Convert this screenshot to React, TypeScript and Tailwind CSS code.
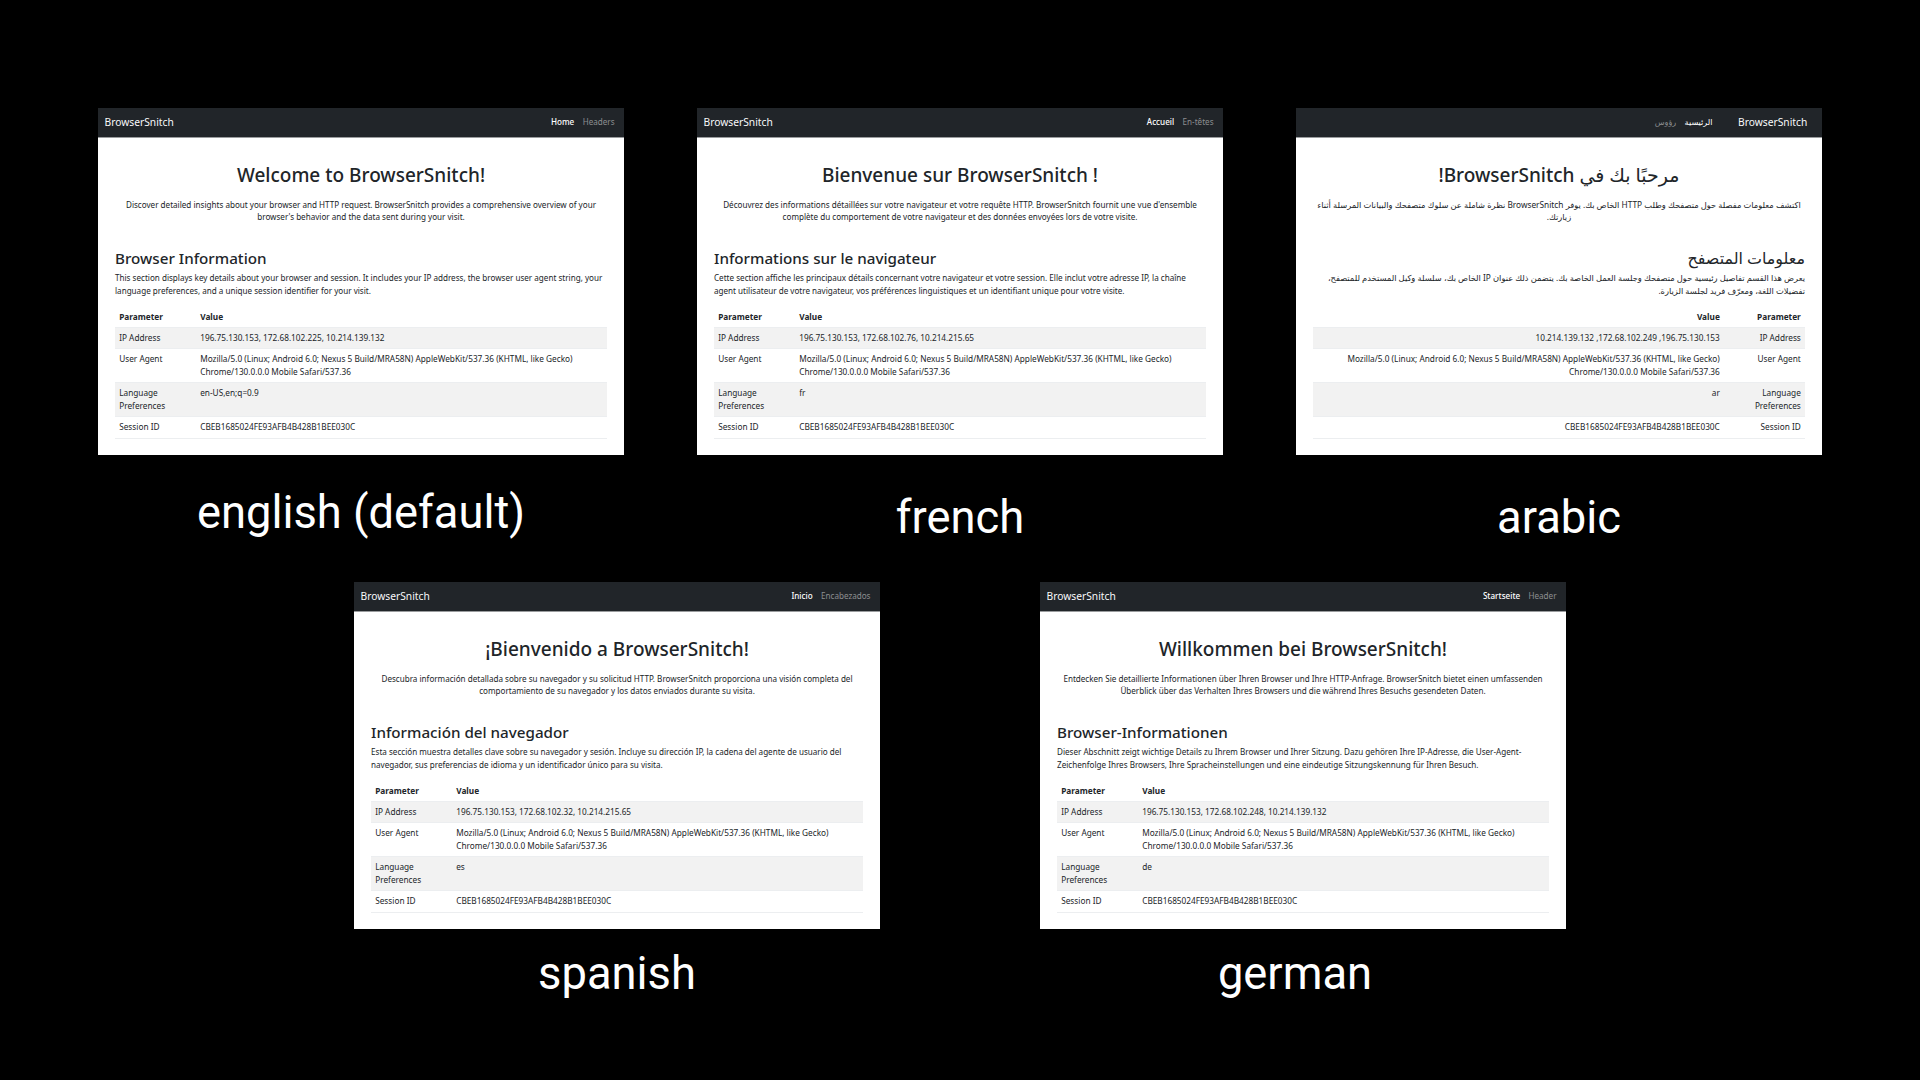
type Lang = {
  home: string;
  headers: string;
  title: string;
  intro: string;
  heading: string;
  body: string;
  ip: string;
  lang: string;
  rtl?: boolean;
};

const ua =
  "Mozilla/5.0 (Linux; Android 6.0; Nexus 5 Build/MRA58N) AppleWebKit/537.36 (KHTML, like Gecko)\nChrome/130.0.0.0 Mobile Safari/537.36";

const en: Lang = {
  home: "Home",
  headers: "Headers",
  title: "Welcome to BrowserSnitch!",
  intro:
    "Discover detailed insights about your browser and HTTP request. BrowserSnitch provides a comprehensive overview of your\nbrowser's behavior and the data sent during your visit.",
  heading: "Browser Information",
  body: "This section displays key details about your browser and session. It includes your IP address, the browser user agent string, your\nlanguage preferences, and a unique session identifier for your visit.",
  ip: "196.75.130.153, 172.68.102.225, 10.214.139.132",
  lang: "en-US,en;q=0.9",
};

const fr: Lang = {
  home: "Accueil",
  headers: "En-têtes",
  title: "Bienvenue sur BrowserSnitch !",
  intro:
    "Découvrez des informations détaillées sur votre navigateur et votre requête HTTP. BrowserSnitch fournit une vue d'ensemble\ncomplète du comportement de votre navigateur et des données envoyées lors de votre visite.",
  heading: "Informations sur le navigateur",
  body: "Cette section affiche les principaux détails concernant votre navigateur et votre session. Elle inclut votre adresse IP, la chaîne\nagent utilisateur de votre navigateur, vos préférences linguistiques et un identifiant unique pour votre visite.",
  ip: "196.75.130.153, 172.68.102.76, 10.214.215.65",
  lang: "fr",
};

const ar: Lang = {
  home: "الرئيسية",
  headers: "رؤوس",
  title: "مرحبًا بك في BrowserSnitch!",
  intro:
    "اكتشف معلومات مفصلة حول متصفحك وطلب HTTP الخاص بك. يوفر BrowserSnitch نظرة شاملة عن سلوك متصفحك والبيانات المرسلة أثناء\nزيارتك.",
  heading: "معلومات المتصفح",
  body: "يعرض هذا القسم تفاصيل رئيسية حول متصفحك وجلسة العمل الخاصة بك. يتضمن ذلك عنوان IP الخاص بك، سلسلة وكيل المستخدم للمتصفح،\nتفضيلات اللغة، ومعرّف فريد لجلسة الزيارة.",
  ip: "196.75.130.153, 172.68.102.249, 10.214.139.132",
  lang: "ar",
  rtl: true,
};

const es: Lang = {
  home: "Inicio",
  headers: "Encabezados",
  title: "¡Bienvenido a BrowserSnitch!",
  intro:
    "Descubra información detallada sobre su navegador y su solicitud HTTP. BrowserSnitch proporciona una visión completa del\ncomportamiento de su navegador y los datos enviados durante su visita.",
  heading: "Información del navegador",
  body: "Esta sección muestra detalles clave sobre su navegador y sesión. Incluye su dirección IP, la cadena del agente de usuario del\nnavegador, sus preferencias de idioma y un identificador único para su visita.",
  ip: "196.75.130.153, 172.68.102.32, 10.214.215.65",
  lang: "es",
};

const de: Lang = {
  home: "Startseite",
  headers: "Header",
  title: "Willkommen bei BrowserSnitch!",
  intro:
    "Entdecken Sie detaillierte Informationen über Ihren Browser und Ihre HTTP-Anfrage. BrowserSnitch bietet einen umfassenden\nÜberblick über das Verhalten Ihres Browsers und die während Ihres Besuchs gesendeten Daten.",
  heading: "Browser-Informationen",
  body: "Dieser Abschnitt zeigt wichtige Details zu Ihrem Browser und Ihrer Sitzung. Dazu gehören Ihre IP-Adresse, die User-Agent-\nZeichenfolge Ihres Browsers, Ihre Spracheinstellungen und eine eindeutige Sitzungskennung für Ihren Besuch.",
  ip: "196.75.130.153, 172.68.102.248, 10.214.139.132",
  lang: "de",
};

const Row = ({ name, value, striped }: { name: string; value: string; striped?: boolean }) => (
  <tr className={`border-b border-[#eceef0] ${striped ? "bg-[#f2f2f2]" : ""}`}>
    <td className="w-[81px] px-[4.2px] py-[3.9px] align-top whitespace-pre-line">{name}</td>
    <td className="px-[4.2px] py-[3.9px] align-top whitespace-pre-line">{value}</td>
  </tr>
);

const Panel = ({ t }: { t: Lang }) => (
  <div
    dir={t.rtl ? "rtl" : "ltr"}
    className="w-[526px] h-[347px] overflow-hidden bg-white text-[#212529] text-[8.25px] leading-[12.6px] font-['Noto_Sans','DejaVu_Sans',sans-serif]"
  >
    <nav className="flex items-center h-[29.5px] bg-[#212529] pl-[6.5px] pr-[5.3px] rtl:pr-[6.3px] border-b border-[#9a9c9e]">
      <span className="text-[10.25px] text-[#f8f9fa] me-[8.4px] rtl:me-[21.4px] rtl:ms-[8.4px]">BrowserSnitch</span>
      <div className={`flex text-[8.1px] ${t.rtl ? "" : "ml-auto"}`}>
        <span className="px-[4.2px] text-white font-medium">{t.home}</span>
        <span className="px-[4.2px] text-[#8c8e90]">{t.headers}</span>
      </div>
    </nav>
    <div className="px-[17px]">
      <h1 className="mt-[25px] text-center text-[19px] leading-[25px] font-medium">{t.title}</h1>
      <p className="mt-[11px] text-center text-[8.1px] rtl:text-[8.3px] leading-[12.9px] whitespace-pre">{t.intro}</p>
      <h3 className="mt-[25.3px] text-[15.2px] rtl:text-[15.9px] leading-[17.6px] font-medium">{t.heading}</h3>
      <p className="mt-[4.5px] text-[8.1px] rtl:text-[8.3px] leading-[12.9px] whitespace-pre">{t.body}</p>
      <table className="mt-[9.1px] w-full table-fixed border-collapse text-start">
        <thead>
          <tr className="border-b border-[#eceef0]">
            <th className="w-[81px] px-[4.2px] py-[3.9px] text-start font-bold">Parameter</th>
            <th className="px-[4.2px] py-[3.9px] text-start font-bold">Value</th>
          </tr>
        </thead>
        <tbody>
          <Row name="IP Address" value={t.ip} striped />
          <Row name="User Agent" value={ua} />
          <Row name={"Language\nPreferences"} value={t.lang} striped />
          <Row name="Session ID" value="CBEB1685024FE93AFB4B428B1BEE030C" />
        </tbody>
      </table>
    </div>
  </div>
);

const Item = ({ t, label, gap }: { t: Lang; label: string; gap: string }) => (
  <div className="flex flex-col items-center">
    <Panel t={t} />
    <span className={`${gap} text-[45.3px] leading-[56px] text-white font-['Roboto',sans-serif]`}>{label}</span>
  </div>
);

export default function App() {
  return (
    <div className="h-screen overflow-hidden bg-black pt-[108px]">
      <div className="flex justify-center gap-[73px]">
        <Item t={en} label="english (default)" gap="mt-[30px]" />
        <Item t={fr} label="french" gap="mt-[35px]" />
        <Item t={ar} label="arabic" gap="mt-[35px]" />
      </div>
      <div className="mt-[36px] flex justify-center gap-[160px]">
        <Item t={es} label="spanish" gap="mt-[17px]" />
        <Item t={de} label="german" gap="mt-[17px] me-[16px]" />
      </div>
    </div>
  );
}
